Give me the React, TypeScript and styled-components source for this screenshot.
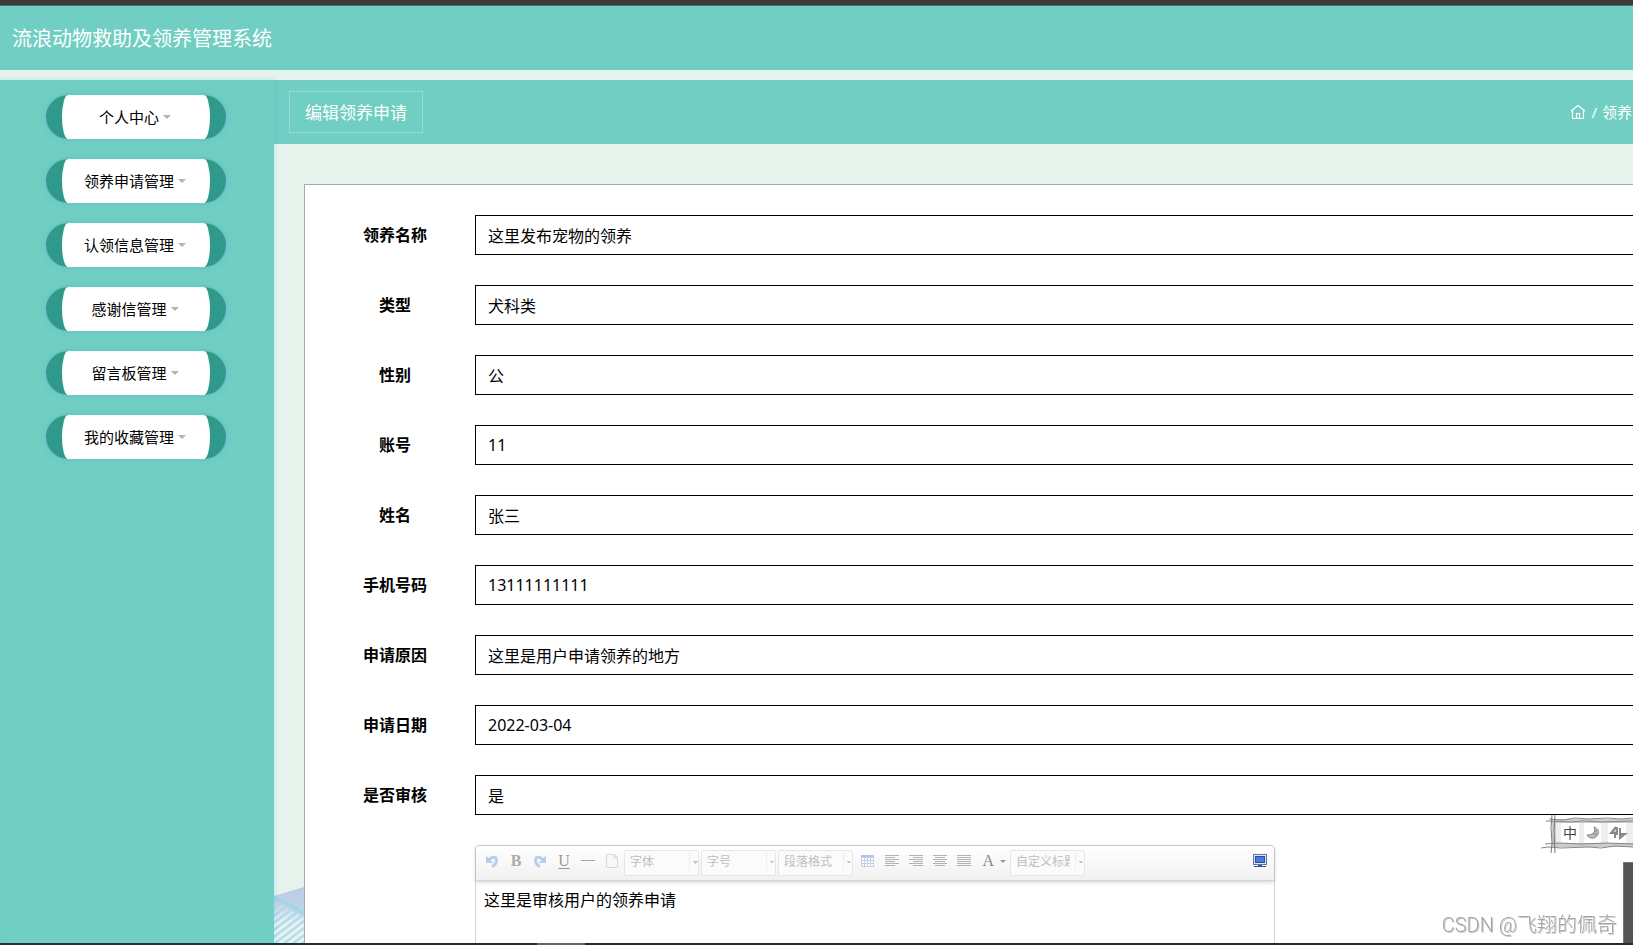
import React from "react";
import styled, { createGlobalStyle } from "styled-components";

const teal = "#70cec2";
const mint = "#e5f3ec";
const glow = "0 0 6px rgba(30, 144, 255, 0.2)";

const GlobalStyle = createGlobalStyle`
  * { box-sizing: border-box; }
  body {
    margin: 0;
    overflow: hidden;
    background: ${mint};
    color: #000;
    font: 16px/24px "Noto Sans", "Noto Sans CJK SC", sans-serif;
  }
  button, input, select, textarea { font: inherit; color: inherit; margin: 0; }
`;

const Shell = styled.div`
  display: flex;
  flex-direction: column;
  height: 100vh;
  overflow: hidden;
`;
const TopEdge = styled.div`
  flex: none;
  height: 6px;
  background: #3b3b3b;
  border-bottom: 1px solid #5c6a68;
`;
const BottomEdge = styled.div`
  flex: none;
  height: 2px;
  background: linear-gradient(90deg, #262938 537px, #62656c 537px, #62656c 585px, #262938 585px);
`;
const Header = styled.header`
  flex: none;
  display: flex;
  align-items: center;
  height: 64px;
  padding: 2px 12px 0;
  margin-bottom: 10px;
  background: ${teal};
  color: #fff;
`;
const SiteTitle = styled.h1`
  margin: 0;
  font-size: 20px;
  line-height: 30px;
  font-weight: 400;
`;
const Columns = styled.div`
  display: flex;
  flex: 1;
  min-height: 0;
`;
const Sidebar = styled.nav`
  flex: none;
  width: 274px;
  padding: 15px 48px 0 46px;
  background: ${teal};
  box-shadow: ${glow};
  position: relative;
  z-index: 1;
`;
const Menu = styled.ul`
  display: grid;
  gap: 20px;
  margin: 0;
  padding: 0;
  list-style: none;
`;
const MenuButton = styled.button`
  display: flex;
  align-items: center;
  justify-content: center;
  gap: 4px;
  width: 100%;
  height: 44px;
  padding: 0 2px 1px 0;
  border: solid #30998b;
  border-width: 0 16px;
  border-radius: 22px;
  background: #fff;
  box-shadow: ${glow};
  font-size: 15px;
  line-height: 22px;
`;
const Caret = styled.span`
  border: 4px solid transparent;
  border-top-color: #b3b3b3;
  border-bottom: 0;
`;
const Content = styled.main`
  flex: 1;
  min-width: 0;
  position: relative;
  overflow: hidden;
`;
const CrumbBar = styled.div`
  display: flex;
  align-items: center;
  justify-content: space-between;
  height: 64px;
  padding: 0 1px 0 15px;
  background: ${teal};
  color: #fff;
`;
const PageTitle = styled.h2`
  margin: 0;
  padding: 9px 15px 7px;
  border: 1px solid rgba(255, 255, 255, 0.3);
  font-size: 17px;
  line-height: 24px;
  font-weight: 400;
`;
const Crumbs = styled.nav`
  display: flex;
  align-items: center;
  gap: 5px;
  font-size: 15px;
  line-height: 22px;
`;
const CrumbLink = styled.a`
  display: flex;
  color: inherit;
  text-decoration: none;
`;
const Scenery = styled.svg`
  position: absolute;
  left: 0;
  bottom: 0;
`;
const Panel = styled.form`
  position: relative;
  min-height: 100%;
  margin: 40px -30px 0 30px;
  padding: 30px 0 30px 40px;
  border: 1px solid #aaa;
  background: #fff;
`;
const Row = styled.div`
  display: flex;
  margin-bottom: 30px;
`;
const Label = styled.label`
  flex: none;
  width: 100px;
  margin-right: 30px;
  text-align: center;
  font-weight: 700;
  line-height: 40px;
`;
const TextInput = styled.input`
  flex: 1;
  min-width: 0;
  height: 40px;
  padding: 0 12px;
  border: 1px solid #000;
  border-radius: 0;
  background: #fff;
`;
const Editor = styled.div`
  width: 800px;
  margin-left: 130px;
  border: 1px solid #d4d4d4;
  border-radius: 4px;
`;
const Toolbar = styled.div`
  display: flex;
  align-items: flex-start;
  height: 35px;
  padding: 4px 2px 0 4px;
  border-bottom: 1px solid #d4d4d4;
  border-radius: 4px 4px 0 0;
  background: linear-gradient(#fff, #f1f1f1);
  box-shadow: 0 1px 4px rgba(0, 0, 0, 0.2);
`;
const Tool = styled.button<{ $wide?: boolean }>`
  flex: none;
  display: flex;
  align-items: center;
  justify-content: ${(p) => (p.$wide ? "flex-end" : "center")};
  width: ${(p) => (p.$wide ? 35 : 24)}px;
  height: 22px;
  padding: ${(p) => (p.$wide ? "0 4px 0 0" : "0")};
  border: 0;
  background: none;
`;
const Spacer = styled.div`
  flex: 1;
`;
const Picker = styled.div`
  flex: none;
  display: flex;
  width: 75px;
  height: 26px;
  margin-right: 2px;
  border: 1px solid #e6e6e6;
  border-radius: 2px;
  background: #fbfbfb;
`;
const PickerSelect = styled.select`
  width: 100%;
  padding: 0 14px 2px 5px;
  border: 0;
  appearance: none;
  color: #b9bfc4;
  font-size: 12px;
  line-height: 18px;
  text-overflow: clip;
  background:
    linear-gradient(#eee, #eee) right 8px top 0 / 1px 20px no-repeat,
    conic-gradient(from -45deg at 50% 100%, #c6c6c6 90deg, transparent 0) right 0 top 10px / 6px 3px no-repeat;
`;
const EditorText = styled.textarea`
  display: block;
  width: 100%;
  height: 240px;
  padding: 7px 8px;
  border: 0;
  resize: none;
  background: transparent;
`;
const InkBar = styled.div`
  position: fixed;
  right: 0;
  bottom: 90px;
  width: 92px;
  height: 40px;
  z-index: 2;
`;
const InkMode = styled.span`
  position: absolute;
  left: 22px;
  top: 7px;
  font: 14px/20px "Noto Sans CJK SC", sans-serif;
  color: #444;
`;
const SideBlock = styled.div`
  position: fixed;
  right: 0;
  bottom: 2px;
  width: 10px;
  height: 81px;
  border: solid #777;
  border-width: 1px 0 0 1px;
  background: #545454;
  z-index: 2;
`;
const Watermark = styled.div`
  position: fixed;
  right: 16px;
  bottom: 5px;
  font: 20px/30px Roboto, "Noto Sans CJK SC", sans-serif;
  font-weight: 300;
  color: #a3a3a3;
  text-shadow: -1px -1px 0 #fff, 1px 1px 0 #ccc;
  z-index: 2;
`;

const menuItems = ["个人中心", "领养申请管理", "认领信息管理", "感谢信管理", "留言板管理", "我的收藏管理"];

const fields = [
  { id: "title", label: "领养名称", value: "这里发布宠物的领养" },
  { id: "kind", label: "类型", value: "犬科类" },
  { id: "sex", label: "性别", value: "公" },
  { id: "account", label: "账号", value: "11" },
  { id: "name", label: "姓名", value: "张三" },
  { id: "phone", label: "手机号码", value: "13111111111" },
  { id: "reason", label: "申请原因", value: "这里是用户申请领养的地方" },
  { id: "date", label: "申请日期", value: "2022-03-04" },
  { id: "review", label: "是否审核", value: "是" },
];

const Icon = ({ children }: { children: React.ReactNode }) => (
  <svg width="16" height="16" viewBox="0 0 16 16" fill="none" aria-hidden="true">
    {children}
  </svg>
);

const UndoArrow = () => (
  <>
    <path d="M5 7C8 3 12.500 3.500 12.500 7.500C12.500 10 11 12 8 13.500" stroke="#b5d0ea" strokeWidth="3" />
    <path d="M2 2.500V10H9.500Z" fill="#b5d0ea" />
  </>
);

const LetterB = styled.span`
  font: 700 16px/20px "Liberation Serif", serif;
  color: #aaa;
`;
const LetterU = styled.span`
  font: 16px/20px "Liberation Serif", serif;
  color: #999;
  text-decoration: underline;
  text-underline-offset: 2px;
`;
const LetterA = styled.span`
  font: 16px/20px "Liberation Serif", serif;
  color: #888;
  margin-right: 6px;
`;

const AlignIcon = ({ rows }: { rows: [number, number][] }) => (
  <Icon>
    {rows.map(([x, w], i) => (
      <rect key={i} x={x} y={2 + i * 2} width={w} height="1" fill="#b3b3b3" />
    ))}
  </Icon>
);

const aligns: { name: string; rows: [number, number][] }[] = [
  { name: "左对齐", rows: [[2, 14], [2, 10], [2, 14], [2, 10], [2, 14], [2, 10]] },
  { name: "右对齐", rows: [[2, 14], [6, 10], [2, 14], [6, 10], [2, 14], [6, 10]] },
  { name: "居中", rows: [[2, 14], [4, 10], [2, 14], [4, 10], [2, 14], [4, 10]] },
  { name: "两端对齐", rows: [[2, 14], [2, 14], [2, 14], [2, 14], [2, 14], [2, 14]] },
];

const ToolPicker = ({ text }: { text: string }) => (
  <Picker>
    <PickerSelect aria-label={text} defaultValue={text}>
      <option>{text}</option>
    </PickerSelect>
  </Picker>
);

const HillScenery = () => (
  <Scenery width="30" height="58" viewBox="0 0 30 58" aria-hidden="true">
    <defs>
      <linearGradient id="hill" x1="0" y1="0" x2="0" y2="1">
        <stop offset="0" stopColor="#bfcbe3" />
        <stop offset="0.5" stopColor="#b9d8ea" />
        <stop offset="1" stopColor="#b4e0e8" />
      </linearGradient>
      <linearGradient id="stripe" x1="0" y1="22" x2="0" y2="58" gradientUnits="userSpaceOnUse">
        <stop offset="0" stopColor="#e7f4f2" stopOpacity="0.2" />
        <stop offset="0.5" stopColor="#e7f4f2" />
      </linearGradient>
      <clipPath id="field"><path d="M0 17L30 32V58H0Z" /></clipPath>
    </defs>
    <path d="M0 11L30 2V58H0Z" fill="url(#hill)" />
    <g clipPath="url(#field)">
      {[22, 29, 36, 43, 50, 57, 64, 71, 78, 85].map((y) => (
        <path key={y} d={`M-2 ${y}L32 ${y - 26}`} stroke="url(#stripe)" strokeWidth="3" />
      ))}
    </g>
    <path d="M0 13Q16 19 30 29" stroke="#a2d4ea" strokeWidth="3" fill="none" />
  </Scenery>
);

export default function App() {
  return (
    <Shell>
      <GlobalStyle />
      <TopEdge />
      <Header>
        <SiteTitle>流浪动物救助及领养管理系统</SiteTitle>
      </Header>
      <Columns>
        <Sidebar>
          <Menu>
            {menuItems.map((item) => (
              <li key={item}>
                <MenuButton type="button">
                  {item}
                  <Caret />
                </MenuButton>
              </li>
            ))}
          </Menu>
        </Sidebar>
        <Content>
          <CrumbBar>
            <PageTitle>编辑领养申请</PageTitle>
            <Crumbs>
              <CrumbLink href="#home" aria-label="首页">
                <Icon>
                  <path d="M1 7L8 1.500L15 7M2.500 6V14.500H13.500V6M6.500 14V9.500H9.500V14" stroke="#fff" strokeWidth="1.200" />
                </Icon>
              </CrumbLink>
              <span>/</span>
              <CrumbLink href="#adopt">领养</CrumbLink>
            </Crumbs>
          </CrumbBar>
          <HillScenery />
          <Panel>
            {fields.map((f) => (
              <Row key={f.id}>
                <Label htmlFor={f.id}>{f.label}</Label>
                <TextInput id={f.id} defaultValue={f.value} />
              </Row>
            ))}
            <Editor>
              <Toolbar>
                <Tool type="button" aria-label="撤销"><Icon><UndoArrow /></Icon></Tool>
                <Tool type="button" aria-label="加粗"><LetterB>B</LetterB></Tool>
                <Tool type="button" aria-label="重做">
                  <Icon><g transform="matrix(-1 0 0 1 16 0)"><UndoArrow /></g></Icon>
                </Tool>
                <Tool type="button" aria-label="下划线"><LetterU>U</LetterU></Tool>
                <Tool type="button" aria-label="分隔线">
                  <Icon><rect x="1" y="7" width="14" height="1" fill="#a5a5a5" /></Icon>
                </Tool>
                <Tool type="button" aria-label="清空文档">
                  <Icon>
                    <path d="M2.500 1.500H10.500L13.500 4.500V14.500H2.500Z" fill="#f7f8fa" stroke="#d6d9de" />
                    <path d="M10.500 1.500V4.500H13.500" fill="#dfe2e8" stroke="#d0d3da" />
                  </Icon>
                </Tool>
                <ToolPicker text="字体" />
                <ToolPicker text="字号" />
                <ToolPicker text="段落格式" />
                <Tool type="button" aria-label="插入表格">
                  <Icon>
                    <rect x="2" y="2" width="13" height="12" fill="#c6d0e4" />
                    <rect x="2" y="2" width="13" height="2" fill="#b3c4ee" />
                    {[5, 8, 11].map((y) =>
                      [3, 6, 9, 12].map((x) => (
                        <rect key={`${x}-${y}`} x={x} y={y} width="2" height="2" fill="#fff" />
                      ))
                    )}
                  </Icon>
                </Tool>
                {aligns.map((a) => (
                  <Tool key={a.name} type="button" aria-label={a.name}><AlignIcon rows={a.rows} /></Tool>
                ))}
                <Tool type="button" $wide aria-label="字体颜色">
                  <LetterA>A</LetterA>
                  <svg width="6" height="3" viewBox="0 0 6 3"><path d="M0 0H6L3 3Z" fill="#999" /></svg>
                </Tool>
                <ToolPicker text="自定义标题" />
                <Spacer />
                <Tool type="button" aria-label="全屏">
                  <Icon>
                    <rect x="1.500" y="1.500" width="13" height="10" fill="#dfe6f5" stroke="#5e76ab" />
                    <rect x="3.500" y="3.500" width="9" height="6" fill="#4c78df" stroke="#2c4ea5" />
                    <rect x="6" y="12" width="4" height="1" fill="#3a5288" />
                    <rect x="2" y="13" width="12" height="1" fill="#3a5288" />
                  </Icon>
                </Tool>
              </Toolbar>
              <EditorText aria-label="审核回复" defaultValue="这里是审核用户的领养申请" />
            </Editor>
          </Panel>
        </Content>
      </Columns>
      <BottomEdge />
      <InkBar>
        <svg width="92" height="40" viewBox="0 0 92 40" fill="none" aria-hidden="true">
          <rect x="11" y="4" width="81" height="28" fill="#ccc" />
          <rect x="15" y="8" width="77" height="20" fill="#eee" />
          <rect x="20" y="8" width="18" height="20" fill="#fff" />
          <rect x="43" y="8" width="17" height="20" fill="#fff" />
          <rect x="67" y="8" width="18" height="20" fill="#fff" />
          <path d="M8 4L22 5L34 3L48 4L66 3L80 4L92 3M5 6L30 7L42 6L60 7L92 6M4 29L18 28L40 29L66 28L92 29M0 33L7 32L20 33L48 32L60 33L74 31L92 32" stroke="#888" strokeWidth="1" />
          <path d="M11 0L10 12L11 28L10 38M14 0L13 16L14 38" stroke="#777" strokeWidth="1" />
          <path d="M53 12C55 17 52 20 46 20C48 24 54 24 56 21C59 17 57 13 53 12Z" fill="#bbb" stroke="#888" />
          <path d="M53 16L56 16M52 19L56 19" stroke="#888" />
          <path d="M75 12L70 18H74V23M76 12V20M79 13V23L84 19H79" fill="#bbb" stroke="#888" strokeWidth="2" />
        </svg>
        <InkMode>中</InkMode>
      </InkBar>
      <SideBlock />
      <Watermark>CSDN @飞翔的佩奇</Watermark>
    </Shell>
  );
}
